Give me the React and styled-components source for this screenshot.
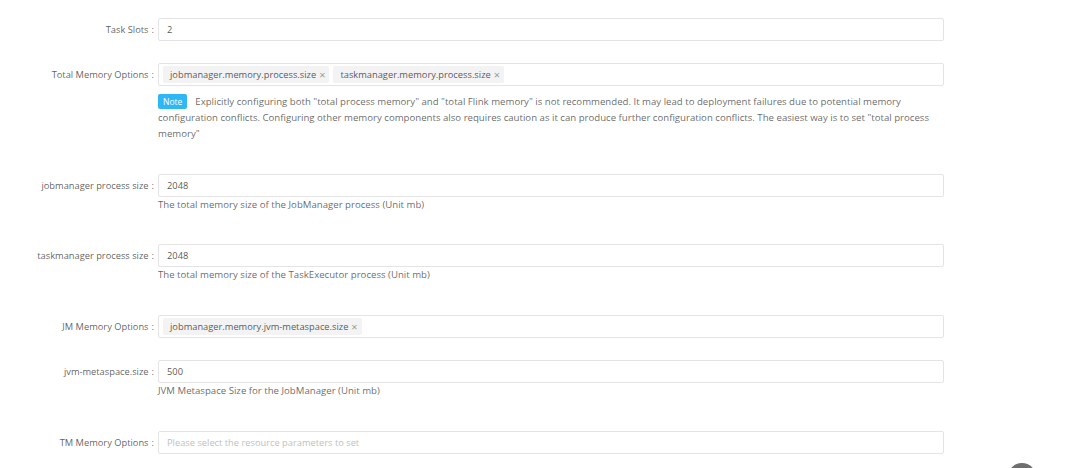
import React from 'react'
import styled, { createGlobalStyle } from 'styled-components'

const GlobalStyle = createGlobalStyle`
  html, body {
    margin: 0;
    padding: 0;
    background: #fff;
    font-family: "Open Sans", "Noto Sans", sans-serif;
    font-size: 9.3px;
    color: rgba(0, 0, 0, 0.65);
  }
`;

const Page = styled.div`
  position: relative;
  width: 1080px;
  height: 468px;
  overflow: hidden;
  padding-top: 18px;
  box-sizing: border-box;
`;

const Item = styled.div`
  display: flex;
  align-items: flex-start;
  margin-bottom: ${p => p.$mb}px;
`;

const Label = styled.label`
  width: 158px;
  flex-shrink: 0;
  height: 23px;
  line-height: 23px;
  text-align: right;
  padding-right: 4px;
  box-sizing: border-box;
  white-space: nowrap;
  &::after {
    content: ":";
    margin-left: 3px;
  }
`;

const Control = styled.div`
  width: 786px;
  display: flex;
  flex-direction: column;
`;

const Box = styled.div`
  height: 23px;
  box-sizing: border-box;
  border: 1px solid #e4e4e4;
  border-radius: 2px;
  background: #fff;
  display: flex;
  align-items: center;
  gap: 4px;
  padding: 0 ${p => (p.$tags ? 4 : 8)}px;
  color: rgba(0, 0, 0, 0.7);
`;

const Placeholder = styled.span`
  margin-left: 4px;
  color: #bfbfbf;
`;

const Tag = styled.span`
  display: inline-flex;
  align-items: center;
  height: 17px;
  padding: 0 4px 0 7px;
  background: #f3f3f3;
  border-radius: 2px;
  color: rgba(0, 0, 0, 0.68);
  white-space: nowrap;
`;

const Close = styled.span`
  margin-left: 3px;
  font-size: 11px;
  color: #9a9a9a;
`;

const Help = styled.div`
  font-size: 9.65px;
  line-height: 16px;
  color: rgba(0, 0, 0, 0.62);
`;

const NoteBlock = styled.div`
  margin-top: 8px;
  font-size: 9.65px;
  line-height: 16px;
  color: rgba(0, 0, 0, 0.62);
`;

const Badge = styled.span`
  display: inline-block;
  background: #2db7f5;
  color: #fff;
  font-size: 8.5px;
  line-height: 15px;
  padding: 0 5px;
  border-radius: 2px;
  margin-right: 8px;
`;

const BackTop = styled.div`
  position: absolute;
  left: 1008px;
  top: 463px;
  width: 28px;
  height: 28px;
  border-radius: 50%;
  background: #6f6f6f;
`;

function TagSelect({ tags, placeholder }) {
  return (
    <Box $tags>
      {tags.length === 0 && <Placeholder>{placeholder}</Placeholder>}
      {tags.map(t => (
        <Tag key={t}>{t}<Close>×</Close></Tag>
      ))}
    </Box>
  )
}

export default function App() {
  return (
    <Page>
      <GlobalStyle />
      <Item $mb={22}>
        <Label>Task Slots</Label>
        <Control><Box>2</Box></Control>
      </Item>
      <Item $mb={32}>
        <Label>Total Memory Options</Label>
        <Control>
          <TagSelect tags={['jobmanager.memory.process.size', 'taskmanager.memory.process.size']} />
          <NoteBlock>
            <Badge>Note</Badge>
            Explicitly configuring both "total process memory" and "total Flink memory" is not recommended. It may lead to deployment failures due to potential memory configuration conflicts. Configuring other memory components also requires caution as it can produce further configuration conflicts. The easiest way is to set "total process memory"
          </NoteBlock>
        </Control>
      </Item>
      <Item $mb={31}>
        <Label>jobmanager process size</Label>
        <Control>
          <Box>2048</Box>
          <Help>The total memory size of the JobManager process (Unit mb)</Help>
        </Control>
      </Item>
      <Item $mb={32}>
        <Label>taskmanager process size</Label>
        <Control>
          <Box>2048</Box>
          <Help>The total memory size of the TaskExecutor process (Unit mb)</Help>
        </Control>
      </Item>
      <Item $mb={22}>
        <Label>JM Memory Options</Label>
        <Control>
          <TagSelect tags={['jobmanager.memory.jvm-metaspace.size']} />
        </Control>
      </Item>
      <Item $mb={32}>
        <Label>jvm-metaspace.size</Label>
        <Control>
          <Box>500</Box>
          <Help>JVM Metaspace Size for the JobManager (Unit mb)</Help>
        </Control>
      </Item>
      <Item $mb={0}>
        <Label>TM Memory Options</Label>
        <Control>
          <TagSelect tags={[]} placeholder="Please select the resource parameters to set" />
        </Control>
      </Item>
      <BackTop />
    </Page>
  )
}
